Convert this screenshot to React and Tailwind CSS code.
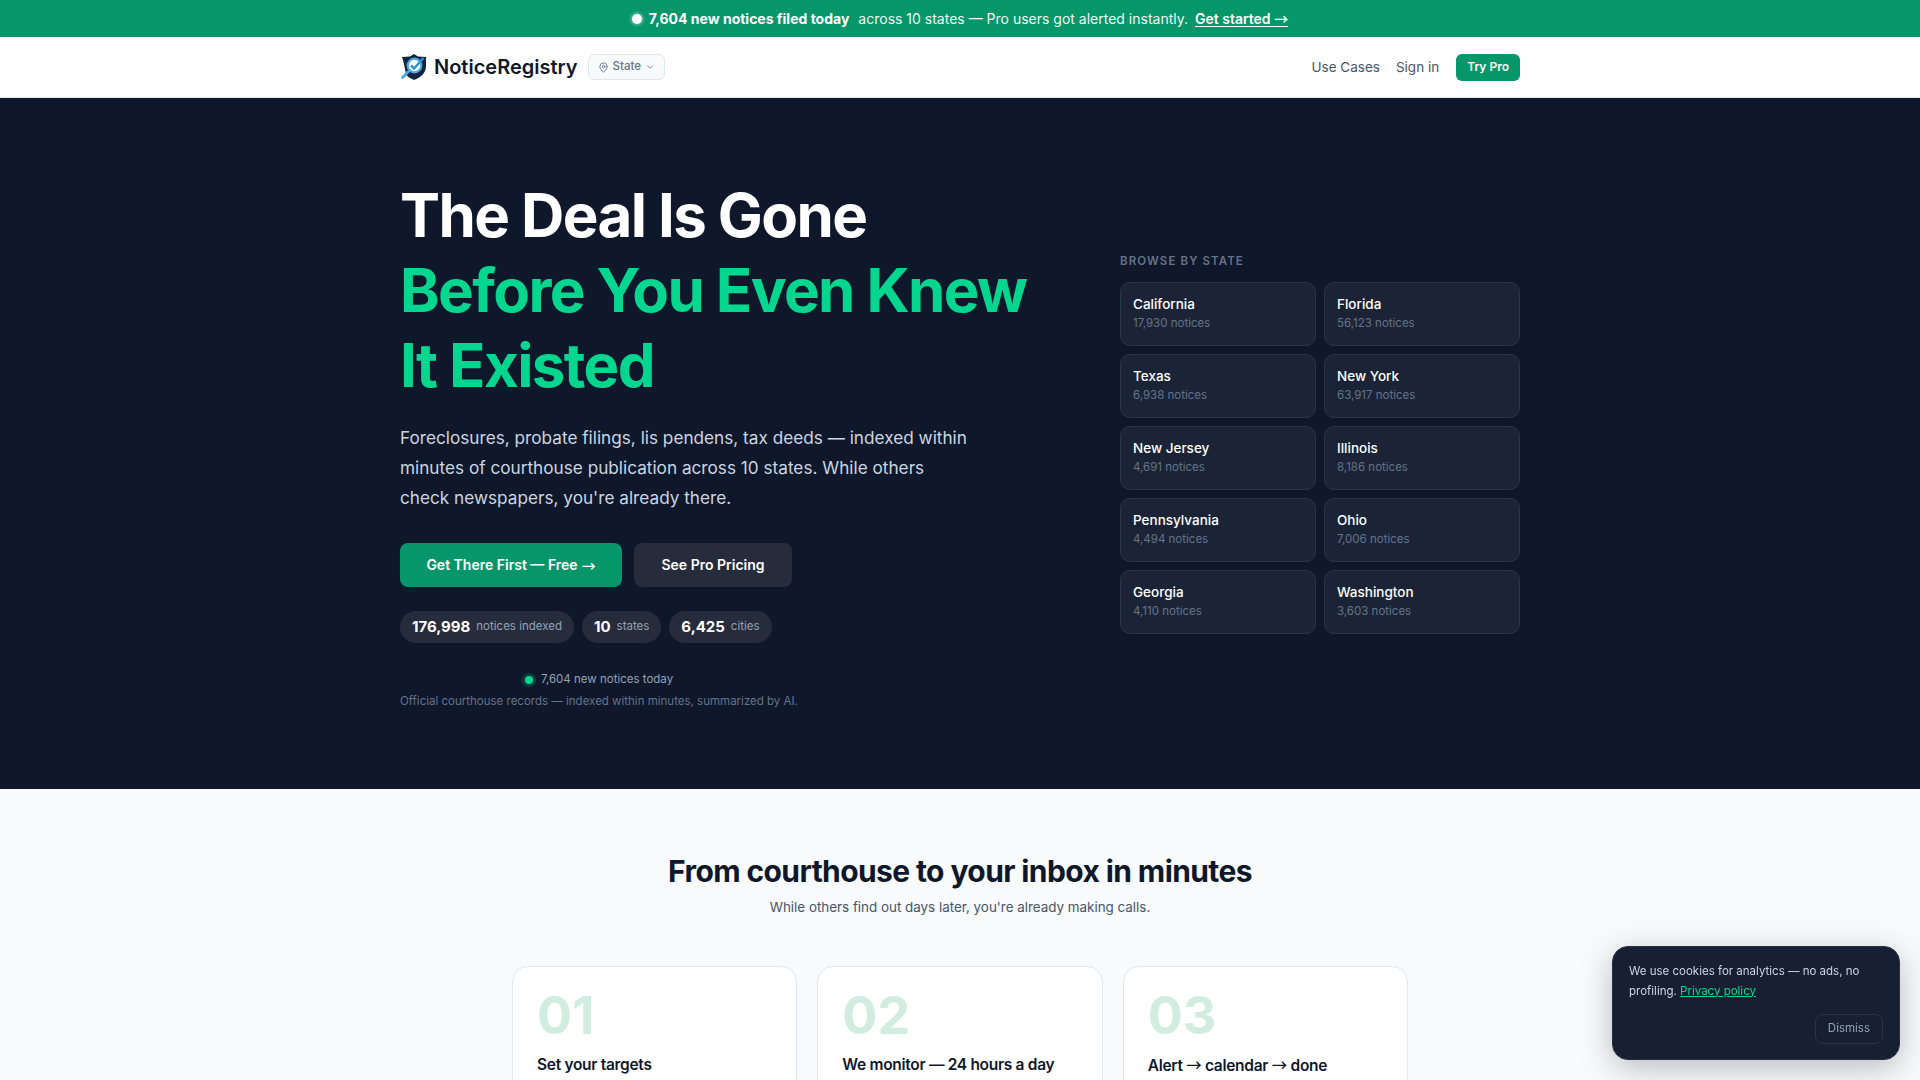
import { ChevronDown, MapPin } from 'lucide-react';

const states = [
  ['California', '17,930'],
  ['Florida', '56,123'],
  ['Texas', '6,938'],
  ['New York', '63,917'],
  ['New Jersey', '4,691'],
  ['Illinois', '8,186'],
  ['Pennsylvania', '4,494'],
  ['Ohio', '7,006'],
  ['Georgia', '4,110'],
  ['Washington', '3,603'],
];

const stats = [
  ['176,998', 'notices indexed'],
  ['10', 'states'],
  ['6,425', 'cities'],
];

const steps = [
  ['01', <>Set your targets</>],
  ['02', <>We monitor — 24 hours a day</>],
  ['03', <>Alert <Arrow /> calendar <Arrow /> done</>],
];

// the reference's arrow is long and thin, Inter's is short
function Arrow() {
  return <span className="font-['Noto_Sans_CJK_SC',sans-serif] font-medium">→</span>;
}

function Logo() {
  return (
    <svg width="28" height="28" viewBox="0 0 28 28" fill="none">
      <path d="M14 1 L18 3.5 L26 4 V13 C26 20 21 24.5 14 27 C10.5 25.5 8 24 6 21.5 L4 11 L2 4 L10 3.5 Z" fill="#14233f" />
      <circle cx="14.5" cy="12.5" r="6.8" fill="#fff" stroke="#4aa8e0" strokeWidth="2.2" />
      <path d="M11 12.5 L14 15.5 L23.5 5" stroke="#2f93d6" strokeWidth="2.5" fill="none" />
      <path d="M9.5 17.5 L2.5 24.5" stroke="#4aa8e0" strokeWidth="2.8" strokeLinecap="round" />
    </svg>
  );
}

export default function App() {
  return (
    <div className="h-screen overflow-hidden bg-[#f8fafc] font-['Inter',sans-serif] text-[#0f172a]">
      {/* Banner */}
      <div className="h-[37px] bg-[#059669] flex items-center justify-center text-white text-[14px]">
        <span className="w-[10px] h-[10px] rounded-full bg-white mr-[7px] shadow-[0_0_4px_rgba(255,255,255,0.8)]"></span>
        <span className="font-bold mr-[9px]">7,604 new notices filed today</span>
        <span className="opacity-95">across 10 states — Pro users got alerted instantly.</span>
        <a className="font-semibold underline underline-offset-2 ml-[7px]">Get started <Arrow /></a>
      </div>

      {/* Nav */}
      <nav className="h-[61px] bg-white border-b border-[#e2e8f0]">
        <div className="w-[1120px] h-full mx-auto flex items-center justify-between">
          <div className="flex items-center">
            <Logo />
            <span className="ml-[6px] text-[20px] font-semibold">NoticeRegistry</span>
            <button className="ml-[10px] h-[26px] px-[9px] flex items-center gap-[4px] rounded-md border border-[#e2e8f0] bg-[#f8fafc] text-[#64748b] text-[11.5px] font-medium">
              <MapPin size={11} />
              State
              <ChevronDown size={10} />
            </button>
          </div>
          <div className="flex items-center text-[#475569] text-[13.5px]">
            <a>Use Cases</a>
            <a className="ml-4">Sign in</a>
            <a className="ml-[17px] h-[27px] px-[11px] rounded-md bg-[#059669] text-white text-xs font-semibold flex items-center">Try Pro</a>
          </div>
        </div>
      </nav>

      {/* Hero */}
      <section className="h-[691px] bg-[#0f172a]">
        <div className="w-[1120px] mx-auto flex justify-between pt-[80px]">
          <div className="w-[640px]">
            <h1 className="text-[60px] leading-[75px] font-bold tracking-[-1.6px] text-white">
              The Deal Is Gone
              <br />
              <span className="text-[#02d68f]">Before You Even Knew
                <br />
                It Existed</span>
            </h1>
            <p className="mt-[20px] w-[570px] text-[17.2px] leading-[30px] text-[#cbd5e1]">
              Foreclosures, probate filings, lis pendens, tax deeds — indexed within minutes of courthouse publication across 10 states. While others check newspapers, you're already there.
            </p>
            <div className="mt-[30px] flex gap-3">
              <a className="h-11 w-[222px] rounded-lg bg-[#059669] text-white text-sm font-semibold flex items-center justify-center gap-1">Get There First — Free <Arrow /></a>
              <a className="h-11 w-[158px] rounded-lg bg-[#262c3c] text-white text-sm font-semibold flex items-center justify-center">See Pro Pricing</a>
            </div>
            <div className="mt-6 flex gap-2">
              {stats.map(([n, label]) => (
                <div key={label} className="h-8 px-3 rounded-full bg-[#262c3c] flex items-center gap-[6px]">
                  <span className="text-[15px] font-bold text-white">{n}</span>
                  <span className="text-[11.5px] text-[#94a3b8]">{label}</span>
                </div>
              ))}
            </div>
            <div className="mt-[28px] w-[398px] flex items-center justify-center gap-[8px] text-[11.5px] text-[#94a3b8]">
              <span className="w-[8px] h-[8px] rounded-full bg-[#02d68f] shadow-[0_0_0_3px_rgba(2,214,143,0.2)]"></span>
              7,604 new notices today
            </div>
            <p className="mt-[5px] text-[11.5px] text-[#64748b]">Official courthouse records — indexed within minutes, summarized by AI.</p>
          </div>

          <div className="w-[400px] pt-[75px]">
            <h2 className="text-[11.5px] font-semibold tracking-[1.1px] text-[#64748b] uppercase mb-[12px]">Browse by state</h2>
            <div className="grid grid-cols-2 gap-2">
              {states.map(([name, count]) => (
                <a key={name} className="h-[64px] rounded-[10px] border border-[#2a3447] bg-[#1b2436] px-3 pb-[2px] flex flex-col justify-center">
                  <span className="text-[13.5px] font-medium text-white leading-[20px]">{name}</span>
                  <span className="text-[11.5px] text-[#64748b] leading-[18px]">{count} notices</span>
                </a>
              ))}
            </div>
          </div>
        </div>
      </section>

      {/* How it works */}
      <section className="pt-[64px]">
        <h2 className="text-center text-[30px] leading-[36px] font-bold tracking-[-0.6px]">From courthouse to your inbox in minutes</h2>
        <p className="mt-2 text-center text-[13.4px] text-[#475569]">While others find out days later, you're already making calls.</p>
        <div className="mt-[49px] w-[896px] mx-auto grid grid-cols-3 gap-[20px]">
          {steps.map(([n, title]) => (
            <div key={n} className="h-[200px] rounded-2xl border border-[#e2e8f0] bg-white px-6 pt-[23px]">
              <div className="text-[52px] leading-[52px] font-bold text-[#d1ede2]">{n}</div>
              <h3 className="mt-[11px] text-[15.5px] font-semibold tracking-[-0.3px]">{title}</h3>
            </div>
          ))}
        </div>
      </section>

      {/* Cookie notice */}
      <div className="fixed right-[20px] bottom-[20px] w-[288px] rounded-2xl bg-[#172033] border border-[#263145] px-4 pt-[15px] pb-[15px] shadow-[0_8px_32px_rgba(0,0,0,0.25)]">
        <p className="text-[11.5px] leading-[19.5px] text-[#cbd5e1]">
          We use cookies for analytics — no ads, no profiling. <a className="text-[#02d68f] underline">Privacy policy</a>
        </p>
        <div className="mt-[13px] flex justify-end">
          <button className="h-[30px] px-[12px] rounded-lg border border-[#2a3447] text-[11.5px] text-[#94a3b8]">Dismiss</button>
        </div>
      </div>
    </div>
  );
}
